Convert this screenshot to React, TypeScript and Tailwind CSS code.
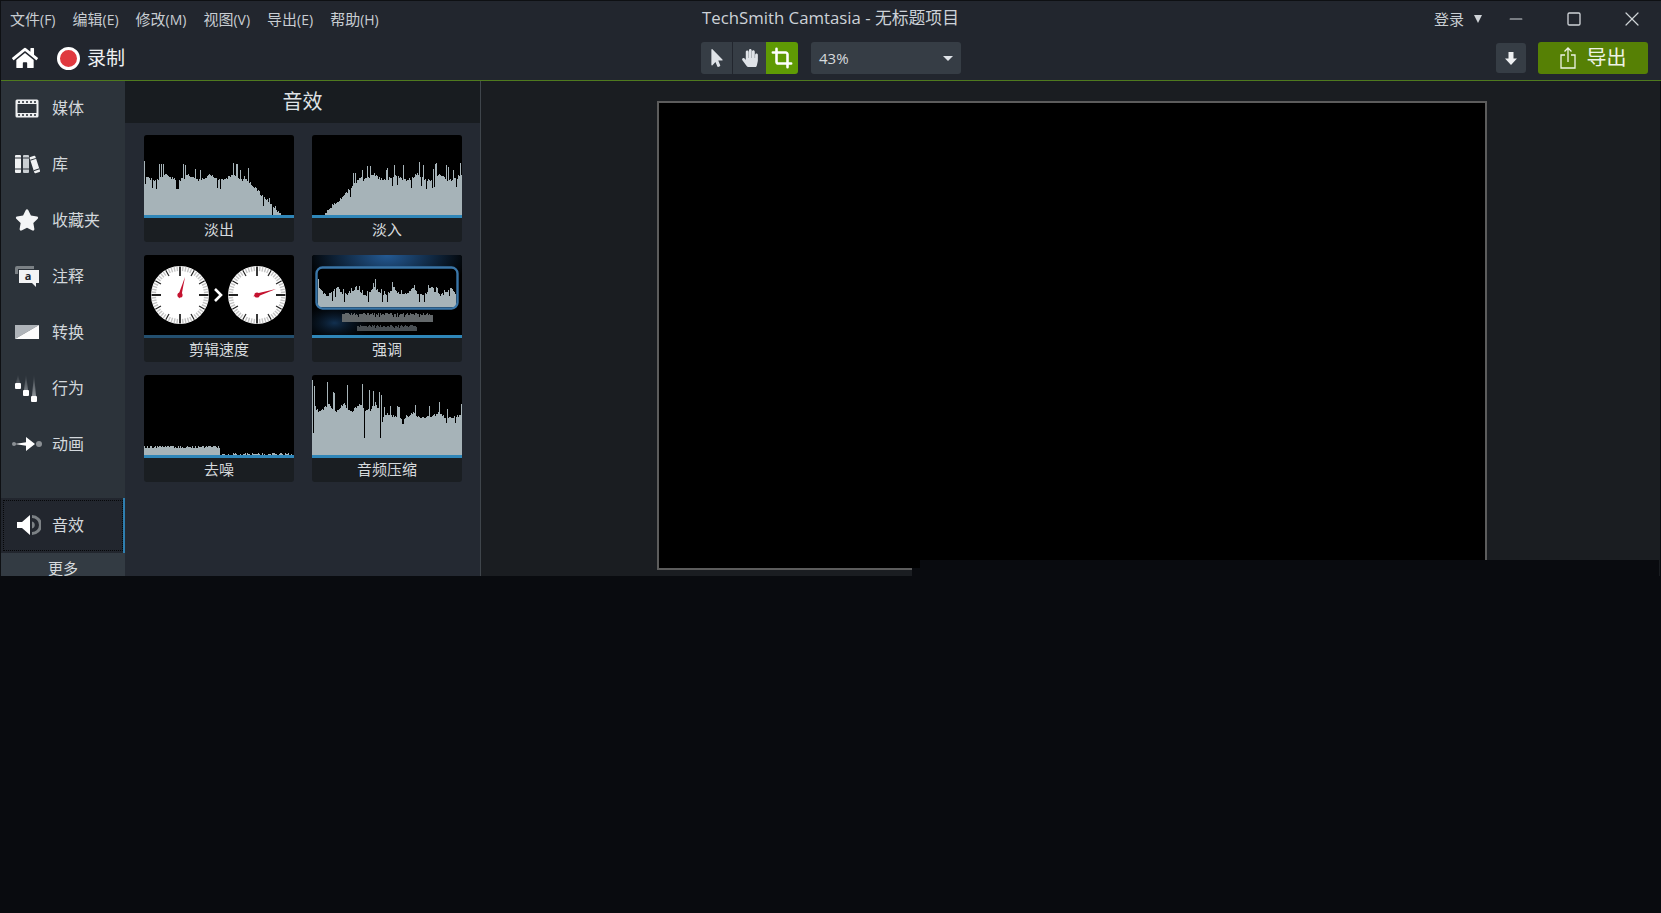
import React from 'react';
import { FaHome, FaStar, FaMousePointer, FaHandPaper } from 'react-icons/fa';
import { Crop, X, Minus, Square } from 'lucide-react';

// deterministic noise so the wave forms stay put between renders
const noise = (seed: number) => {
  let s = seed;
  return () => {
    s = (s * 16807) % 2147483647;
    return (s % 1000) / 1000;
  };
};

type WaveProps = {
  seed: number;
  body: (x: number) => number;
  spike?: (x: number) => number;
  notch?: (x: number) => number;
  width?: number;
  height?: number;
  color?: string;
};

const Wave = ({ seed, body, spike = () => 15, notch, width = 150, height = 80, color = '#a6b3b8' }: WaveProps) => {
  const r = noise(seed);
  const cols: string[] = [];
  for (let x = 0; x < width; x++) {
    const base = body(x);
    if (base >= height) continue;
    const k = r();
    let top = base + (r() - 0.5) * 3;
    if (k > 0.86) top = base - spike(x) * Math.min(1, (height - base) / 30) * (0.6 + r() * 0.4);
    else if (k < 0.07) top = base + (notch ? notch(x) : spike(x) * 0.6);
    cols.push(`M${x + 0.5} ${Math.min(top, height).toFixed(0)}V${height}`);
  }
  return <path d={cols.join('')} stroke={color} strokeWidth={1} fill="none" shapeRendering="crispEdges" />;
};

const scallop = (x: number) => 39 + Math.abs(Math.sin(x / 7)) * 6;
const fadeOut = (x: number) => (x < 100 ? scallop(x) : 42 + ((x - 100) / 37) * 38);
const fadeIn = (x: number) => fadeOut(149 - x);
const denoise = (x: number) => (x < 76 ? 72 : 79);
const squeeze = (x: number) => (x < 70 ? 28 + Math.abs(Math.sin(x / 5)) * 8 : 38 + Math.abs(Math.sin(x / 8)) * 5);

const ClockFace = ({ cx, tipX, tipY }: { cx: number; tipX: number; tipY: number }) => {
  const ticks = Array.from({ length: 60 }, (_, i) => i);
  const cy = 40;
  const dx = tipX - cx;
  const dy = tipY - cy;
  const len = Math.hypot(dx, dy);
  const nx = (-dy / len) * 1.5;
  const ny = (dx / len) * 1.5;
  return (
    <g>
      <circle cx={cx} cy={cy} r={29} fill="#fff" />
      {ticks.map((i) => {
        const a = (i * Math.PI) / 30;
        const major = i % 5 === 0;
        const quarter = i % 15 === 0;
        const inner = quarter ? 19 : major ? 22 : 24;
        return (
          <line
            key={i}
            x1={cx + Math.sin(a) * inner}
            y1={cy - Math.cos(a) * inner}
            x2={cx + Math.sin(a) * 28.5}
            y2={cy - Math.cos(a) * 28.5}
            stroke={major ? '#222' : '#c4c4c4'}
            strokeWidth={quarter ? 1.8 : major ? 1.2 : 1.4}
          />
        );
      })}
      <path d={`M${cx + nx} ${cy + ny}L${tipX} ${tipY}L${cx - nx} ${cy - ny}z`} fill="#c4122f" />
      <path d={`M${cx + nx} ${cy + ny}L${cx - dx * 0.2} ${cy - dy * 0.2}L${cx - nx} ${cy - ny}z`} fill="#c4122f" />
      <circle cx={cx} cy={cy} r={2.6} fill="#c4122f" />
    </g>
  );
};

const thumbs: Record<string, React.ReactNode> = {
  out: <Wave seed={11} body={fadeOut} />,
  in: <Wave seed={29} body={fadeIn} />,
  speed: (
    <g>
      <ClockFace cx={36} tipX={41} tipY={22} />
      <path d="M71 34l6 6-6 6" stroke="#fff" strokeWidth={2.6} fill="none" />
      <ClockFace cx={113} tipX={132} tipY={34} />
    </g>
  ),
  emphasis: (
    <g>
      <defs>
        <radialGradient id="glow" cx="50%" cy="0%" r="55%">
          <stop offset="0%" stopColor="#245a94" />
          <stop offset="100%" stopColor="#000" />
        </radialGradient>
        <radialGradient id="glow2" cx="15%" cy="85%" r="30%">
          <stop offset="0%" stopColor="#123050" />
          <stop offset="100%" stopColor="#000" stopOpacity="0" />
        </radialGradient>
        <filter id="soft">
          <feGaussianBlur stdDeviation="0.5" />
        </filter>
      </defs>
      <rect width="150" height="80" fill="url(#glow)" />
      <rect width="150" height="80" fill="url(#glow2)" />
      <g filter="url(#soft)">
        <g transform="translate(30 55)">
          <Wave seed={91} body={() => 4} spike={() => 3} notch={() => 3} width={91} height={12} color="#63686b" />
        </g>
        <g transform="translate(45 68)">
          <Wave seed={97} body={() => 3} spike={() => 2} notch={() => 2} width={60} height={8} color="#4a4f52" />
        </g>
      </g>
      <rect x="4.5" y="12.5" width="141" height="41" rx="6" fill="#000" />
      <g transform="translate(6 0)">
        <Wave seed={47} body={(x) => 32 + Math.abs(Math.sin(x / 6)) * 8} spike={() => 13} width={138} height={52} />
      </g>
      <rect x="4.5" y="12.5" width="141" height="41" rx="6" fill="none" stroke="#3a76a8" strokeWidth={2.4} />
    </g>
  ),
  noise: <Wave seed={61} body={denoise} spike={() => 3} notch={() => 1} />,
  compress: <Wave seed={83} body={squeeze} spike={(x) => (x < 70 ? 24 : 12)} notch={(x) => (x < 70 ? 28 : 6)} />,
};

const cards = [
  { name: '淡出', thumb: 'out', bar: 'bg-[#2f86b8]' },
  { name: '淡入', thumb: 'in', bar: 'bg-[#2f86b8]' },
  { name: '剪辑速度', thumb: 'speed', bar: 'bg-[#234f6f]' },
  { name: '强调', thumb: 'emphasis', bar: 'bg-[#2f86b8]' },
  { name: '去噪', thumb: 'noise', bar: 'bg-[#2f86b8]' },
  { name: '音频压缩', thumb: 'compress', bar: 'bg-[#2f86b8]' },
];

const EffectCard = ({ name, thumb, bar }: { name: string; thumb: string; bar: string }) => (
  <div className="h-[107px] rounded-[3px] overflow-hidden bg-[#1a1e22] flex flex-col">
    <svg width="150" height="80" viewBox="0 0 150 80" className="bg-black shrink-0 block">
      {thumbs[thumb]}
    </svg>
    <div className={`h-[3px] shrink-0 ${bar}`} />
    <div className="flex-1 flex items-center justify-center pb-[3px] text-[15px] text-[#d6dadd]">{name}</div>
  </div>
);

const FilmIcon = () => (
  <svg width="24" height="19" viewBox="0 0 24 19">
    <rect x="0.500" y="0.500" width="23" height="18" rx="1.500" fill="#eef0f1" />
    <rect x="2.500" y="5" width="19" height="9" fill="#2c333a" />
    <path d="M4 2v2M8 2v2M12 2v2M16 2v2M20 2v2M4 15v2M8 15v2M12 15v2M16 15v2M20 15v2" stroke="#2c333a" strokeWidth="1.6" />
  </svg>
);

const BooksIcon = () => (
  <svg width="26" height="20" viewBox="0 0 26 20">
    <rect x="1" y="1" width="6" height="18" rx="1" fill="#f0f2f3" />
    <rect x="9" y="1" width="6" height="18" rx="1" fill="#c9ced2" />
    <path d="M1 4h14M1 15h14" stroke="#2c333a" strokeWidth="1" />
    <g transform="rotate(-18 21 11)">
      <rect x="18" y="2" width="6" height="17" rx="1" fill="#f0f2f3" />
      <path d="M18 5h6M18 16h6" stroke="#2c333a" strokeWidth="1" />
    </g>
  </svg>
);

const NoteIcon = () => (
  <svg width="26" height="22" viewBox="0 0 26 22">
    <path d="M1 9V3a2 2 0 0 1 2-2h17v3H4v5z" fill="#7b8185" />
    <path d="M5 5h20v13h-3v4l-4-4H5z" fill="#f3f4f5" />
    <text x="14" y="15" textAnchor="middle" fontSize="11" fontWeight="700" fill="#22262e" fontFamily="Open Sans, sans-serif">a</text>
  </svg>
);

const TransitionIcon = () => (
  <svg width="24" height="14" viewBox="0 0 24 14">
    <path d="M0 0h24L0 14z" fill="#aeb3b8" />
    <path d="M24 0v14H0z" fill="#fbfbfb" />
  </svg>
);

const BehaviorIcon = () => (
  <svg width="24" height="28" viewBox="0 0 24 28">
    <defs>
      <linearGradient id="tail" x1="0" y1="0" x2="0" y2="1">
        <stop offset="0%" stopColor="#2c333a" />
        <stop offset="100%" stopColor="#8f959a" />
      </linearGradient>
    </defs>
    <path d="M3 0l2 9h-4zM11 0l2 16h-4zM19 0l2 22h-4z" fill="url(#tail)" />
    <rect x="0" y="9" width="6" height="6" rx="1" fill="#fff" />
    <rect x="8" y="16" width="6" height="6" rx="1" fill="#fff" />
    <rect x="16" y="22" width="6" height="6" rx="1" fill="#fff" />
  </svg>
);

const AnimationIcon = () => (
  <svg width="30" height="16" viewBox="0 0 30 16">
    <circle cx="2" cy="8" r="2" fill="#8b9094" />
    <path d="M3 8l11-1.800V1l9 7-9 7V9.800z" fill="#fff" />
    <circle cx="27" cy="8" r="3" fill="#8b9094" />
  </svg>
);

const SpeakerIcon = () => (
  <svg width="24" height="24" viewBox="0 0 24 24">
    <path d="M0 9h5l8-7v20l-8-7H0z" fill="#fff" />
    <path d="M15 2a10 10 0 0 1 0 20v-3a7 7 0 0 0 0-14z" fill="#7c8185" />
    <path d="M15 8.500a3.600 3.600 0 0 1 0 7z" fill="#7c8185" />
  </svg>
);

const ShareIcon = () => (
  <svg width="16" height="22" viewBox="0 0 16 22" fill="none" stroke="#eef3e6" strokeWidth="1.3">
    <path d="M5 8H1v13h14V8h-4" />
    <path d="M8 15V1M4.500 4.500L8 1l3.500 3.500" />
  </svg>
);

const DownIcon = () => (
  <svg width="12" height="13" viewBox="0 0 12 13">
    <path d="M3.500 0h5v6.500H12L6 13 0 6.500h3.500z" fill="#eef0f2" />
  </svg>
);

const navItems = [
  { name: '媒体', icon: <FilmIcon /> },
  { name: '库', icon: <BooksIcon /> },
  { name: '收藏夹', icon: <FaStar size={24} color="#f4f5f6" /> },
  { name: '注释', icon: <NoteIcon /> },
  { name: '转换', icon: <TransitionIcon /> },
  { name: '行为', icon: <BehaviorIcon /> },
  { name: '动画', icon: <AnimationIcon /> },
];

const menus = [
  ['文件', '(F)'],
  ['编辑', '(E)'],
  ['修改', '(M)'],
  ['视图', '(V)'],
  ['导出', '(E)'],
  ['帮助', '(H)'],
];

export default function App() {
  return (
    <div className="relative w-[1661px] h-[913px] overflow-hidden bg-[#090b0f] font-['Open_Sans','Noto_Sans_CJK_SC',sans-serif] text-[#d6dadd]">
      <div className="h-[576px] flex flex-col border-l border-t border-[#0e1013]">
        {/* title bar + toolbar */}
        <header className="h-[79px] shrink-0 bg-[#22262e] border-b border-[#4f7a1f] box-content">
          <div className="h-[36px] flex items-center relative">
            <nav className="flex pl-[9px] gap-[17px] text-[15px] text-[#c8cdd2]">
              {menus.map(([label, key], i) => (
                <span key={i} className="flex items-center">
                  {label}
                  <span className="text-[14px]">{key}</span>
                </span>
              ))}
            </nav>
            <div className="absolute left-[701px] top-[4px] text-[16.800px] text-[#cdd2d8] whitespace-nowrap">TechSmith Camtasia - 无标题项目</div>
            <div className="ml-auto flex items-center pr-[17px]">
              <span className="text-[15px] text-[#c8cdd2]">登录</span>
              <span className="ml-[10px] mr-[24px] w-0 h-0 border-l-[4px] border-r-[4px] border-t-[8px] border-l-transparent border-r-transparent border-t-[#cfd3d7]" />
              <Minus size={20} strokeWidth={1.400} color="#cfd3d7" className="mr-[40px]" />
              <Square size={16} strokeWidth={2} color="#cfd3d7" className="mr-[38px]" />
              <X size={24} strokeWidth={1.200} color="#cfd3d7" />
            </div>
          </div>
          <div className="h-[43px] flex items-start pt-[5px]">
            <div className="flex items-center h-[32px] pl-[11px]">
              <FaHome size={26} color="#fff" />
              <span className="ml-[19px] w-[23px] h-[23px] rounded-full bg-[#e0393f] border-[3px] border-white" />
              <span className="ml-[7px] text-[19px] text-[#eef0f2]">录制</span>
            </div>
            <div className="ml-[576px] flex h-[32px] rounded-[3px] overflow-hidden">
              <button className="w-[32px] flex items-center justify-center bg-[#363d45] border-r border-[#22262e]">
                <FaMousePointer size={18} color="#dfe3e8" />
              </button>
              <button className="w-[33px] flex items-center justify-center bg-[#363d45]">
                <FaHandPaper size={18} color="#dfe3e8" />
              </button>
              <button className="w-[32px] flex items-center justify-center bg-[#5f9a04]">
                <Crop size={22} strokeWidth={2.800} color="#fff" />
              </button>
            </div>
            <div className="ml-[13px] w-[150px] h-[32px] rounded-[3px] bg-[#363d45] flex items-center justify-between pl-[8px] pr-[8px] text-[15px] text-[#d6dadd]">
              43%
              <span className="w-0 h-0 border-l-[5px] border-r-[5px] border-t-[5px] border-l-transparent border-r-transparent border-t-[#dfe3e8]" />
            </div>
            <button className="ml-auto mt-[1px] w-[30px] h-[30px] rounded-[3px] bg-[#363d45] flex items-center justify-center">
              <DownIcon />
            </button>
            <button className="ml-[12px] mr-[13px] w-[110px] h-[32px] rounded-[3px] bg-[#568005] flex items-center justify-center gap-[11px] text-[20px] text-[#eef3e6]">
              <ShareIcon />
              导出
            </button>
          </div>
        </header>

        <div className="flex-1 flex min-h-0">
          {/* left nav */}
          <aside className="w-[124px] shrink-0 bg-[#2c333a] flex flex-col">
            <div className="h-[418px] shrink-0 -mt-[1px]">
              {navItems.map((item) => (
                <div key={item.name} className="h-[56px] flex items-center">
                  <div className="w-[51px] pl-[1px] flex items-center justify-center">{item.icon}</div>
                  <span className="text-[16px] text-[#d3d8dc]">{item.name}</span>
                </div>
              ))}
            </div>
            <div className="h-[55px] shrink-0 bg-[#22262e] border-r-2 border-[#2f7fb0] p-[2px] pr-0">
              <div className="h-full flex items-center border border-dotted border-[#060709] pb-[2px]">
                <div className="w-[48px] flex items-center justify-center pl-[2px]">
                  <SpeakerIcon />
                </div>
                <span className="text-[16px] text-[#d3d8dc]">音效</span>
              </div>
            </div>
            <div className="flex-1 bg-[#333b43] text-[15px] text-center leading-[30px] overflow-hidden">更多</div>
          </aside>

          {/* effects panel */}
          <section className="w-[355px] shrink-0 bg-[#242932] border-r border-[#3f454b] box-content flex flex-col">
            <div className="h-[42px] shrink-0 bg-[#181c20] flex items-center justify-center text-[20px] text-[#dfe2e5]">音效</div>
            <div className="grid grid-cols-[150px_150px] gap-x-[18px] gap-y-[13px] pl-[19px] pt-[12px]">
              {cards.map((c) => (
                <EffectCard key={c.name} {...c} />
              ))}
            </div>
          </section>

          {/* canvas */}
          <main className="flex-1 bg-[#1a1d21] pl-[176px] pt-[20px] mr-[1px]">
            <div className="w-[830px] h-[469px] bg-black border-2 border-[#5c5c5c]" />
          </main>
        </div>
      </div>

      {/* unpainted part of the window lying over the canvas */}
      <div className="absolute left-[920px] top-[560px] w-[739px] h-[16px] bg-[#090b0f]" />
      <div className="absolute left-[912px] top-[568px] w-[8px] h-[8px] bg-[#090b0f]" />
    </div>
  );
}
